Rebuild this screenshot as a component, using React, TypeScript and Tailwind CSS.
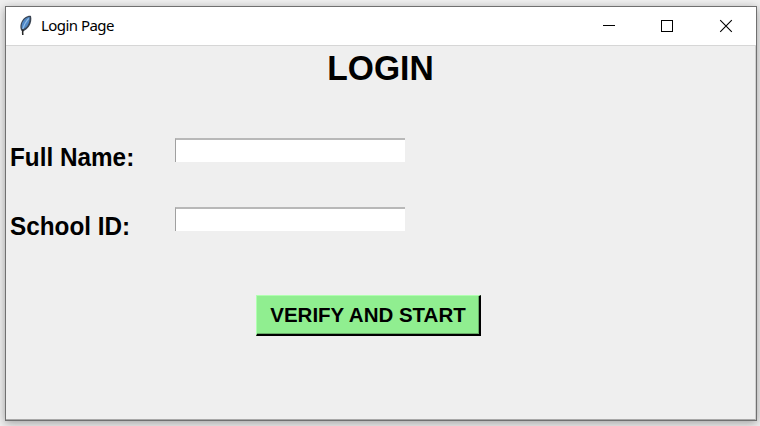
import React from "react";

function Feather() {
  return (
    <svg width="16" height="22" viewBox="0 0 16 22" fill="none" className="shrink-0">
      <path d="M3.4 15.8C1.3 12 2.6 5.9 7 2.6 9 1.1 11.6.5 13 1c.8 3.1.3 7.4-2 10.6-1.6 2.3-3.8 3.9-6 4.8z" fill="#3a4452" />
      <path d="M4.2 14.4C2.8 10.5 4.2 6 7.6 3.6c1.4-1 3-1.6 4.1-1.5.2 3.2-.7 6.4-2.2 8.6-1.2 1.8-3.3 3.1-5.3 3.7z" fill="#4f87c5" />
      <path d="M10.8 3.3C8 6.2 6 10 4.7 14.4" stroke="#91bce5" strokeWidth="1.2" />
      <path d="M5 14.2C4.5 16 4.6 17.8 4.8 20" stroke="#262626" strokeWidth="1.5" />
    </svg>
  );
}

function Controls() {
  return (
    <div className="flex items-center pr-[23px]" aria-label="Window controls">
      <svg width="14" height="14" viewBox="0 0 14 14" shapeRendering="crispEdges"><path d="M1 6h12v1H1z" fill="#000" /></svg>
      <svg width="14" height="14" viewBox="0 0 14 14" shapeRendering="crispEdges" className="ml-[44px]"><path d="M1.5 1.5h11v11h-11z" fill="none" stroke="#000" /></svg>
      <svg width="14" height="14" viewBox="0 0 14 14" className="ml-[45px]"><path d="M1.2 1.2 12.8 12.8M12.8 1.2 1.2 12.8" stroke="#000" strokeWidth="1.1" /></svg>
    </div>
  );
}

function Field({ label, id }: { label: string; id: string }) {
  return (
    <div className="flex h-[69px] items-start pl-1">
      <label htmlFor={id} className="w-[165px] pt-[5px] text-[25px] leading-[28px] font-bold whitespace-nowrap"><span className="inline-block origin-left scale-x-[0.972]">{label}</span></label>
      <input id={id} className="h-[24px] w-[230px] border-t-2 border-l border-t-[#b8b8b8] border-l-[#a0a0a0] bg-white px-1 outline-none" />
    </div>
  );
}

export default function App() {
  return (
    <div className="h-[426px] w-[760px] overflow-hidden bg-[#f0f0f0] pt-[6px] pl-[5px] font-['Liberation_Sans',Arial,sans-serif] text-black">
      <div className="flex h-[415px] w-[752px] flex-col border border-[#707070] bg-[#efefef] shadow-[0_2px_9px_rgba(0,0,0,0.35)]">
        <header className="flex h-[39px] shrink-0 items-center border-b border-[#d6d6d6] bg-white pl-[12px]">
          <Feather />
          <span className="mb-[2px] ml-[7px] flex-1 font-['Noto_Sans','Open_Sans',sans-serif] text-[15px] leading-5 tracking-[-0.55px]">Login Page</span>
          <Controls />
        </header>
        <main className="flex flex-1 flex-col border-r border-b border-r-[#d0d0d0] border-b-[#a8a8a8]">
          <h1 className="mt-[2px] h-[90px] scale-x-[0.96] text-center text-[35px] leading-[40px] font-bold">LOGIN</h1>
          <Field label="Full Name:" id="name" />
          <Field label="School ID:" id="school" />
          <button className="mt-[19px] ml-[250px] h-[41px] w-[225px] border-t border-r-2 border-b-2 border-l border-t-[#b0ffb0] border-r-black border-b-black border-l-[#b0ffb0] bg-[#90ee90] text-[20.5px] font-bold whitespace-nowrap shadow-[inset_-1px_-1px_0_#67ab67]">VERIFY AND START</button>
        </main>
      </div>
    </div>
  );
}
